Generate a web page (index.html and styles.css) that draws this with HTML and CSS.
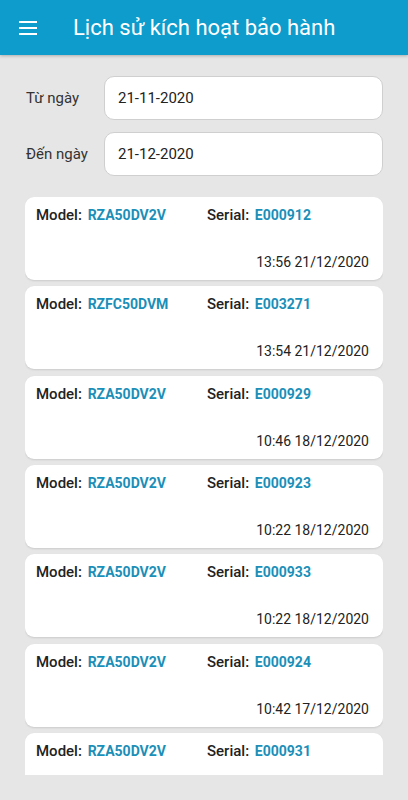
FILE: index.html
```html
<!DOCTYPE html>
<html lang="vi">
<head>
  <meta charset="UTF-8">
  <meta name="viewport" content="width=device-width, initial-scale=1.0">
  <title>Lịch sử kích hoạt bảo hành</title>
  <link rel="stylesheet" href="styles.css">
</head>
<body>

  <header class="toolbar">
    <button class="menu-btn" type="button" aria-label="Menu">
      <svg width="18" height="14" viewBox="0 0 18 14">
        <rect x="0" y="0" width="18" height="2" fill="#fff"/>
        <rect x="0" y="6" width="18" height="2" fill="#fff"/>
        <rect x="0" y="12" width="18" height="2" fill="#fff"/>
      </svg>
    </button>
    <h1>Lịch sử kích hoạt bảo hành</h1>
  </header>

  <form class="filter">
    <div class="field">
      <label for="tuNgay">Từ ngày</label>
      <input type="text" id="tuNgay" value="21-11-2020">
    </div>
    <div class="field">
      <label for="denNgay">Đến ngày</label>
      <input type="text" id="denNgay" value="21-12-2020">
    </div>
  </form>

  <div class="list">
    <div class="card">
      <div class="row">
        <span class="model">Model: <b>RZA50DV2V</b></span>
        <span>Serial: <b>E000912</b></span>
      </div>
      <div class="time">13:56 21/12/2020</div>
    </div>
    <div class="card">
      <div class="row">
        <span class="model">Model: <b>RZFC50DVM</b></span>
        <span>Serial: <b>E003271</b></span>
      </div>
      <div class="time">13:54 21/12/2020</div>
    </div>
    <div class="card">
      <div class="row">
        <span class="model">Model: <b>RZA50DV2V</b></span>
        <span>Serial: <b>E000929</b></span>
      </div>
      <div class="time">10:46 18/12/2020</div>
    </div>
    <div class="card">
      <div class="row">
        <span class="model">Model: <b>RZA50DV2V</b></span>
        <span>Serial: <b>E000923</b></span>
      </div>
      <div class="time">10:22 18/12/2020</div>
    </div>
    <div class="card">
      <div class="row">
        <span class="model">Model: <b>RZA50DV2V</b></span>
        <span>Serial: <b>E000933</b></span>
      </div>
      <div class="time">10:22 18/12/2020</div>
    </div>
    <div class="card">
      <div class="row">
        <span class="model">Model: <b>RZA50DV2V</b></span>
        <span>Serial: <b>E000924</b></span>
      </div>
      <div class="time">10:42 17/12/2020</div>
    </div>
    <div class="card">
      <div class="row">
        <span class="model">Model: <b>RZA50DV2V</b></span>
        <span>Serial: <b>E000931</b></span>
      </div>
      <div class="time">10:40 17/12/2020</div>
    </div>
  </div>

</body>
</html>
```

FILE: styles.css
```css
body {
  margin: 0;
  font-family: Roboto, "Noto Sans", Arial, sans-serif;
  background: #e6e6e6;
  height: 800px;
  overflow: hidden;
}
.toolbar {
  height: 55px;
  background: #0d9ccc;
  display: flex;
  align-items: center;
  padding-left: 19px;
  box-shadow: 0 1px 3px rgba(0, 0, 0, 0.25);
}
.menu-btn {
  background: none;
  border: none;
  padding: 0;
  width: 18px;
  height: 14px;
  display: flex;
  margin-top: 1px;
}
.toolbar h1 {
  margin: 0 0 0 36px;
  color: #fff;
  font-size: 22px;
  font-weight: 400;
}
.filter {
  padding: 21px 25px 21px 26px;
  display: flex;
  flex-direction: column;
  gap: 12px;
}
.field {
  display: flex;
  align-items: center;
}
.field label {
  width: 78px;
  font-size: 15px;
  color: #333;
}
.field input {
  flex: 1;
  height: 44px;
  box-sizing: border-box;
  border: 1px solid #cfcfcf;
  border-radius: 10px;
  background: #fff;
  padding: 0 13px;
  font-family: inherit;
  font-size: 15px;
  color: #222;
}
.list {
  margin: 0 25px;
  height: 578px;
  overflow: hidden;
}
.card {
  background: #fff;
  border-radius: 9px;
  height: 83px;
  box-sizing: border-box;
  padding: 8px 14px 8px 11px;
  margin-bottom: 6.33px;
  display: flex;
  flex-direction: column;
  justify-content: space-between;
  box-shadow: 0 1px 2px rgba(0, 0, 0, 0.12);
  font-size: 14px;
  line-height: 20px;
}
.row {
  display: flex;
  font-size: 15px;
  font-weight: 500;
  color: #222;
}
.row b {
  color: #1a8fb8;
  font-weight: 700;
  font-size: 14px;
  margin-left: 2px;
}
.model {
  width: 171px;
}
.time {
  text-align: right;
  color: #222;
}
```
